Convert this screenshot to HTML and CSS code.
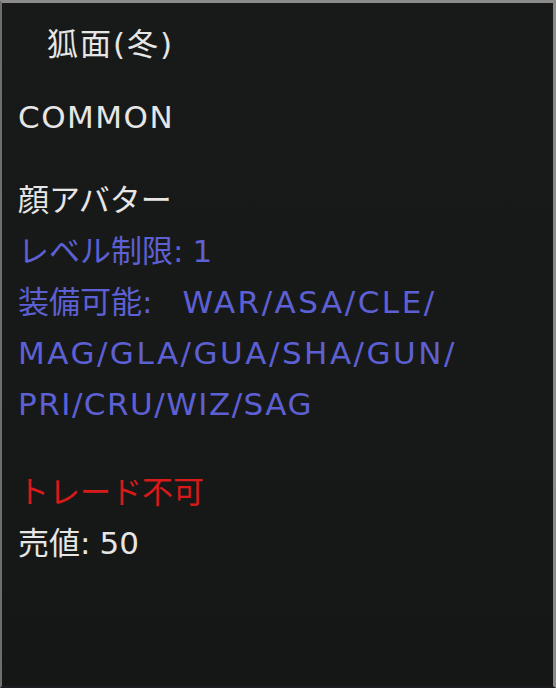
FILE: index.html
```html
<!DOCTYPE html>
<html lang="ja">
  <head>
    <meta charset="UTF-8" />
    <meta name="viewport" content="width=device-width, initial-scale=1.0" />
    <title>狐面(冬)</title>
    <link rel="stylesheet" href="styles.css">
  </head>
  <body>
    <div class="tooltip">
      <div class="item-name">狐面(冬)</div>
      <div class="rarity">COMMON</div>

      <div class="info">
        <div class="line">顔アバター</div>
        <div class="line blue">レベル制限:<span class="num">1</span></div>
        <div class="line blue">装備可能:<span class="classes first">WAR/ASA/CLE/</span></div>
        <div class="line blue classes">MAG/GLA/GUA/SHA/GUN/</div>
        <div class="line blue classes last">PRI/CRU/WIZ/SAG</div>
      </div>

      <div class="info trade">
        <div class="line red">トレード不可</div>
        <div class="line">売値:<span class="num">50</span></div>
      </div>
    </div>
  </body>
</html>
```

FILE: styles.css
```css
html,
body {
  margin: 0;
  padding: 0;
  background: #111;
}

body {
  font-family: "DejaVu Sans", "Noto Sans CJK JP", sans-serif;
  font-size: 31px;
  color: #e6e6e6;
}

.tooltip {
  box-sizing: border-box;
  width: 556px;
  height: 688px;
  padding: 16px 18px 0 16px;
  background: linear-gradient(180deg, #181a19 0%, #171918 60%, #151716 100%);
  border-top: 3px solid #8c8c8a;
  border-left: 2px solid #6e6e6c;
  border-right: 3px solid #8a8a88;
  border-bottom: 2px solid #1e1e22;
}

.line,
.item-name,
.rarity {
  line-height: 51px;
  white-space: nowrap;
}

.item-name {
  padding-left: 29px;
  letter-spacing: 2px;
}

.rarity {
  margin-top: 22px;
  letter-spacing: 1.5px;
}

.info {
  margin-top: 32px;
}

.info.trade {
  margin-top: 37px;
}

.num {
  margin-left: 9px;
}

.blue {
  color: #5d60d4;
}

.classes {
  letter-spacing: 2.5px;
}

.classes.first {
  margin-left: 30px;
}

.classes.last {
  letter-spacing: 1.5px;
}

.red {
  color: #d81a1a;
}
```
